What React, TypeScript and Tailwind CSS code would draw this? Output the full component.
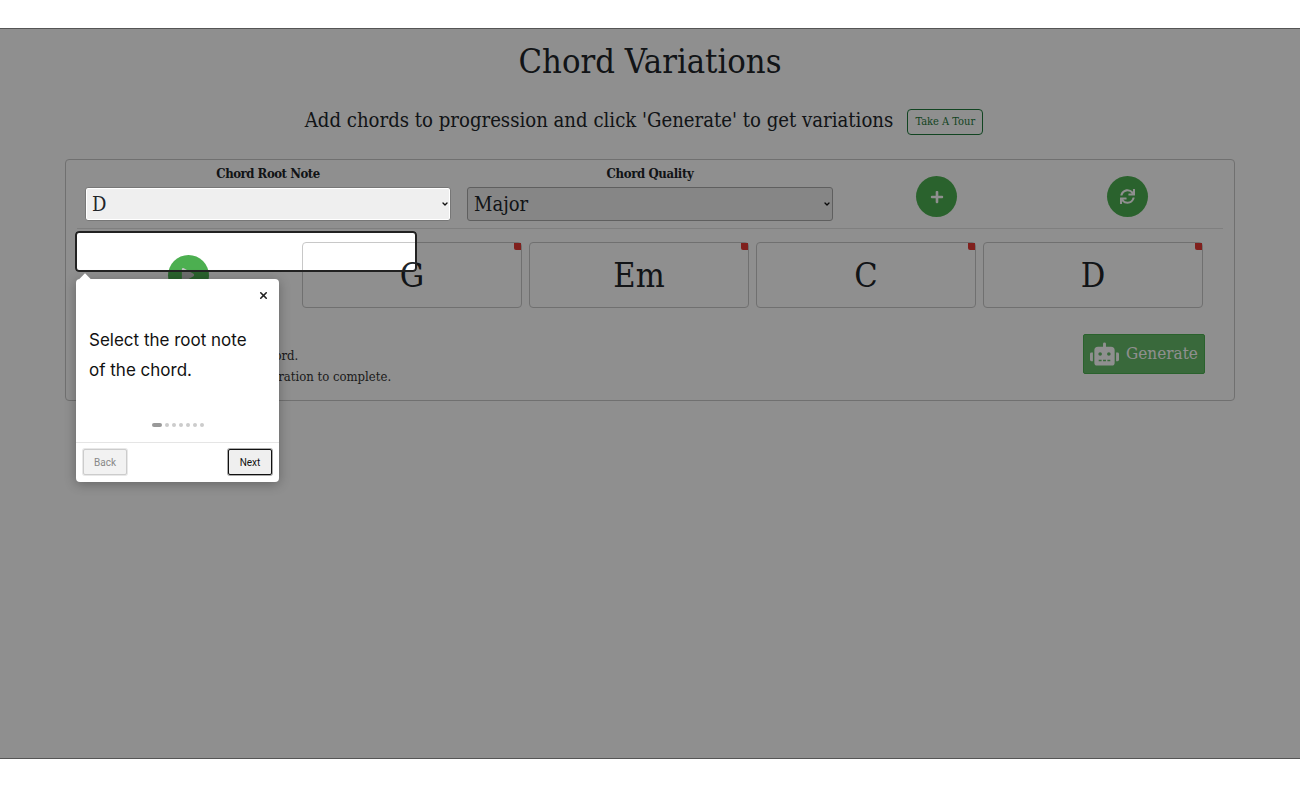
import React from 'react';
import { FaPlay, FaPlus, FaRobot, FaSync } from 'react-icons/fa';
import { ChevronDown, X } from 'lucide-react';

const chords = ['G', 'Em', 'C', 'D'];
const roots = ['C', 'D', 'E', 'F', 'G', 'A', 'B'];
const qualities = ['Major', 'Minor', 'Dim'];

const serif = "font-['DejaVu_Serif_Condensed','DejaVu_Serif',serif]";

const App: React.FC = () => {
  return (
    <div className={`relative h-[788px] w-[1300px] overflow-hidden bg-white text-[#212529] ${serif}`}>
      <div className="pt-[28px]">
        {/* Heading */}
        <h1 className="mt-[11px] h-[44px] text-center text-[34.25px] leading-[44px]">Chord Variations</h1>
        <div className="mt-[22px] flex h-[30px] items-center justify-center">
          <p className="text-[20.15px] leading-[30px]">Add chords to progression and click 'Generate' to get variations</p>
          <button className="ml-[14px] mr-[12px] mt-[3px] h-[26px] w-[76px] rounded-[4px] border border-[#1f7a3c] bg-white pt-px text-[11px] text-[#1f7a3c]">
            Take A Tour
          </button>
        </div>

        {/* Progression panel */}
        <div className="mx-[65px] mt-[24px] h-[242px] rounded-[4px] border border-[#c8c8c8] px-[11px] pt-[5px]">
          <div className="grid grid-cols-12">
            <div className="col-span-4 px-2 text-center">
              <label className="block h-[22px] text-[13px] font-bold leading-[18px] tracking-[-0.45px]">Chord Root Note</label>
              <div className="relative z-20">
                <select
                  defaultValue="D"
                  className="h-[34px] w-full appearance-none rounded-[3px] border border-[#777] bg-[#efefef] pl-[6px] text-[20px] shadow-[inset_0_0_0_1px_#fff]"
                >
                  {roots.map(r => (
                    <option key={r}>{r}</option>
                  ))}
                </select>
                <ChevronDown className="pointer-events-none absolute right-[2px] top-[13px] h-[8px] w-[8px] text-[#111]" strokeWidth={4} />
              </div>
            </div>
            <div className="col-span-4 px-2 text-center">
              <label className="block h-[22px] text-[13px] font-bold leading-[18px] tracking-[-0.35px]">Chord Quality</label>
              <div className="relative">
                <select
                  defaultValue="Major"
                  className="h-[34px] w-full appearance-none rounded-[3px] border border-[#aaa] bg-[#efefef] pl-[6px] text-[20px]"
                >
                  {qualities.map(q => (
                    <option key={q}>{q}</option>
                  ))}
                </select>
                <ChevronDown className="pointer-events-none absolute right-[2px] top-[13px] h-[8px] w-[8px] text-[#111]" strokeWidth={4} />
              </div>
            </div>
            <div className="col-span-2 flex justify-center pt-[11px]">
              <button className="flex h-[41px] w-[41px] items-center justify-center rounded-full bg-[#4caf50] text-white">
                <FaPlus className="h-[14px] w-[14px]" />
              </button>
            </div>
            <div className="col-span-2 flex justify-center pt-[11px]">
              <button className="flex h-[41px] w-[41px] items-center justify-center rounded-full bg-[#4caf50] text-white">
                <FaSync className="h-[15px] w-[15px]" />
              </button>
            </div>
          </div>
          <div className="mt-[7px] h-px bg-[#e2e2e2]" />

          {/* Chord cards */}
          <div className="-ml-[2px] mt-[13px] flex gap-[7px]">
            <div className="flex h-[66px] w-[220px] items-center justify-center pl-[6px]">
              <button className="flex h-[41px] w-[41px] items-center justify-center rounded-full bg-[#4caf50] text-white">
                <FaPlay className="h-[14px] w-[14px] text-[#c4c4c4]" />
              </button>
            </div>
            {chords.map(c => (
              <div key={c} className="relative flex h-[66px] w-[220px] items-center justify-center rounded-[4px] border border-[#c8c8c8] text-[34px]">
                {c}
                <span className="absolute right-0 top-0 h-[7px] w-[7px] rounded-bl-[2px] bg-[#e53935]" />
              </div>
            ))}
          </div>

          <div className="mt-[26px] flex items-start justify-between">
            <div className="ml-[4px] pt-[11px] text-[13px] leading-[21px] text-[#333]">
              <p>Click on a chord to delete the chord.</p>
              <p>Press generate and wait for generation to complete.</p>
            </div>
            <button className="mr-[18px] flex h-[40px] w-[122px] items-center justify-center gap-[7px] rounded-[2px] border border-[#4caf50] bg-[#66bb6a] text-[17px] text-white">
              <FaRobot className="h-[24px] w-[29px]" />
              Generate
            </button>
          </div>
        </div>
      </div>

      {/* Tour overlay */}
      <div className="absolute inset-x-0 top-[28px] z-10 h-[731px] overflow-hidden border-y border-[#555]">
        <div className="absolute left-[75px] top-[202px] h-[41px] w-[342px] rounded-[4px] border-2 border-[#222] shadow-[0_0_0_2000px_rgba(0,0,0,0.44)]" />
        <div className="absolute left-[76px] top-[250px] flex h-[203px] w-[203px] flex-col rounded-[4px] bg-white font-['Inter',sans-serif] shadow-[0_2px_12px_rgba(0,0,0,0.3)]">
          <span className="absolute -top-[4px] left-[5px] h-[8px] w-[8px] rotate-45 bg-white" />
          <div className="flex h-[22px] items-end justify-end pr-[10px]">
            <X className="h-[11px] w-[11px] text-[#222]" strokeWidth={3.5} />
          </div>
          <p className="mt-[24px] h-[86px] px-[13px] text-[17px] leading-[30px] text-[#111]">Select the root note of the chord.</p>
          <div className="mt-[12px] flex items-center justify-center gap-[3px]">
            <span className="h-[4px] w-[10px] rounded-full bg-[#999]" />
            {[0, 1, 2, 3, 4, 5].map(i => (
              <span key={i} className="h-[4px] w-[4px] rounded-full bg-[#ccc]" />
            ))}
          </div>
          <div className="mt-[15px] flex flex-1 items-center justify-between border-t border-[#e5e5e5] px-[7px] pb-[1px] font-['Roboto',sans-serif] text-[10px]">
            <button className="h-[26px] w-[44px] rounded-[2px] border border-[#ccc] bg-[#f2f2f2] text-[#888] shadow-[0_0_0_1px_#e8e8e8]">Back</button>
            <button className="h-[26px] w-[44px] rounded-[2px] border border-[#111] bg-[#efefef] text-[#111] shadow-[0_0_0_1px_#aaa]">Next</button>
          </div>
        </div>
      </div>
    </div>
  );
};

export default App;
